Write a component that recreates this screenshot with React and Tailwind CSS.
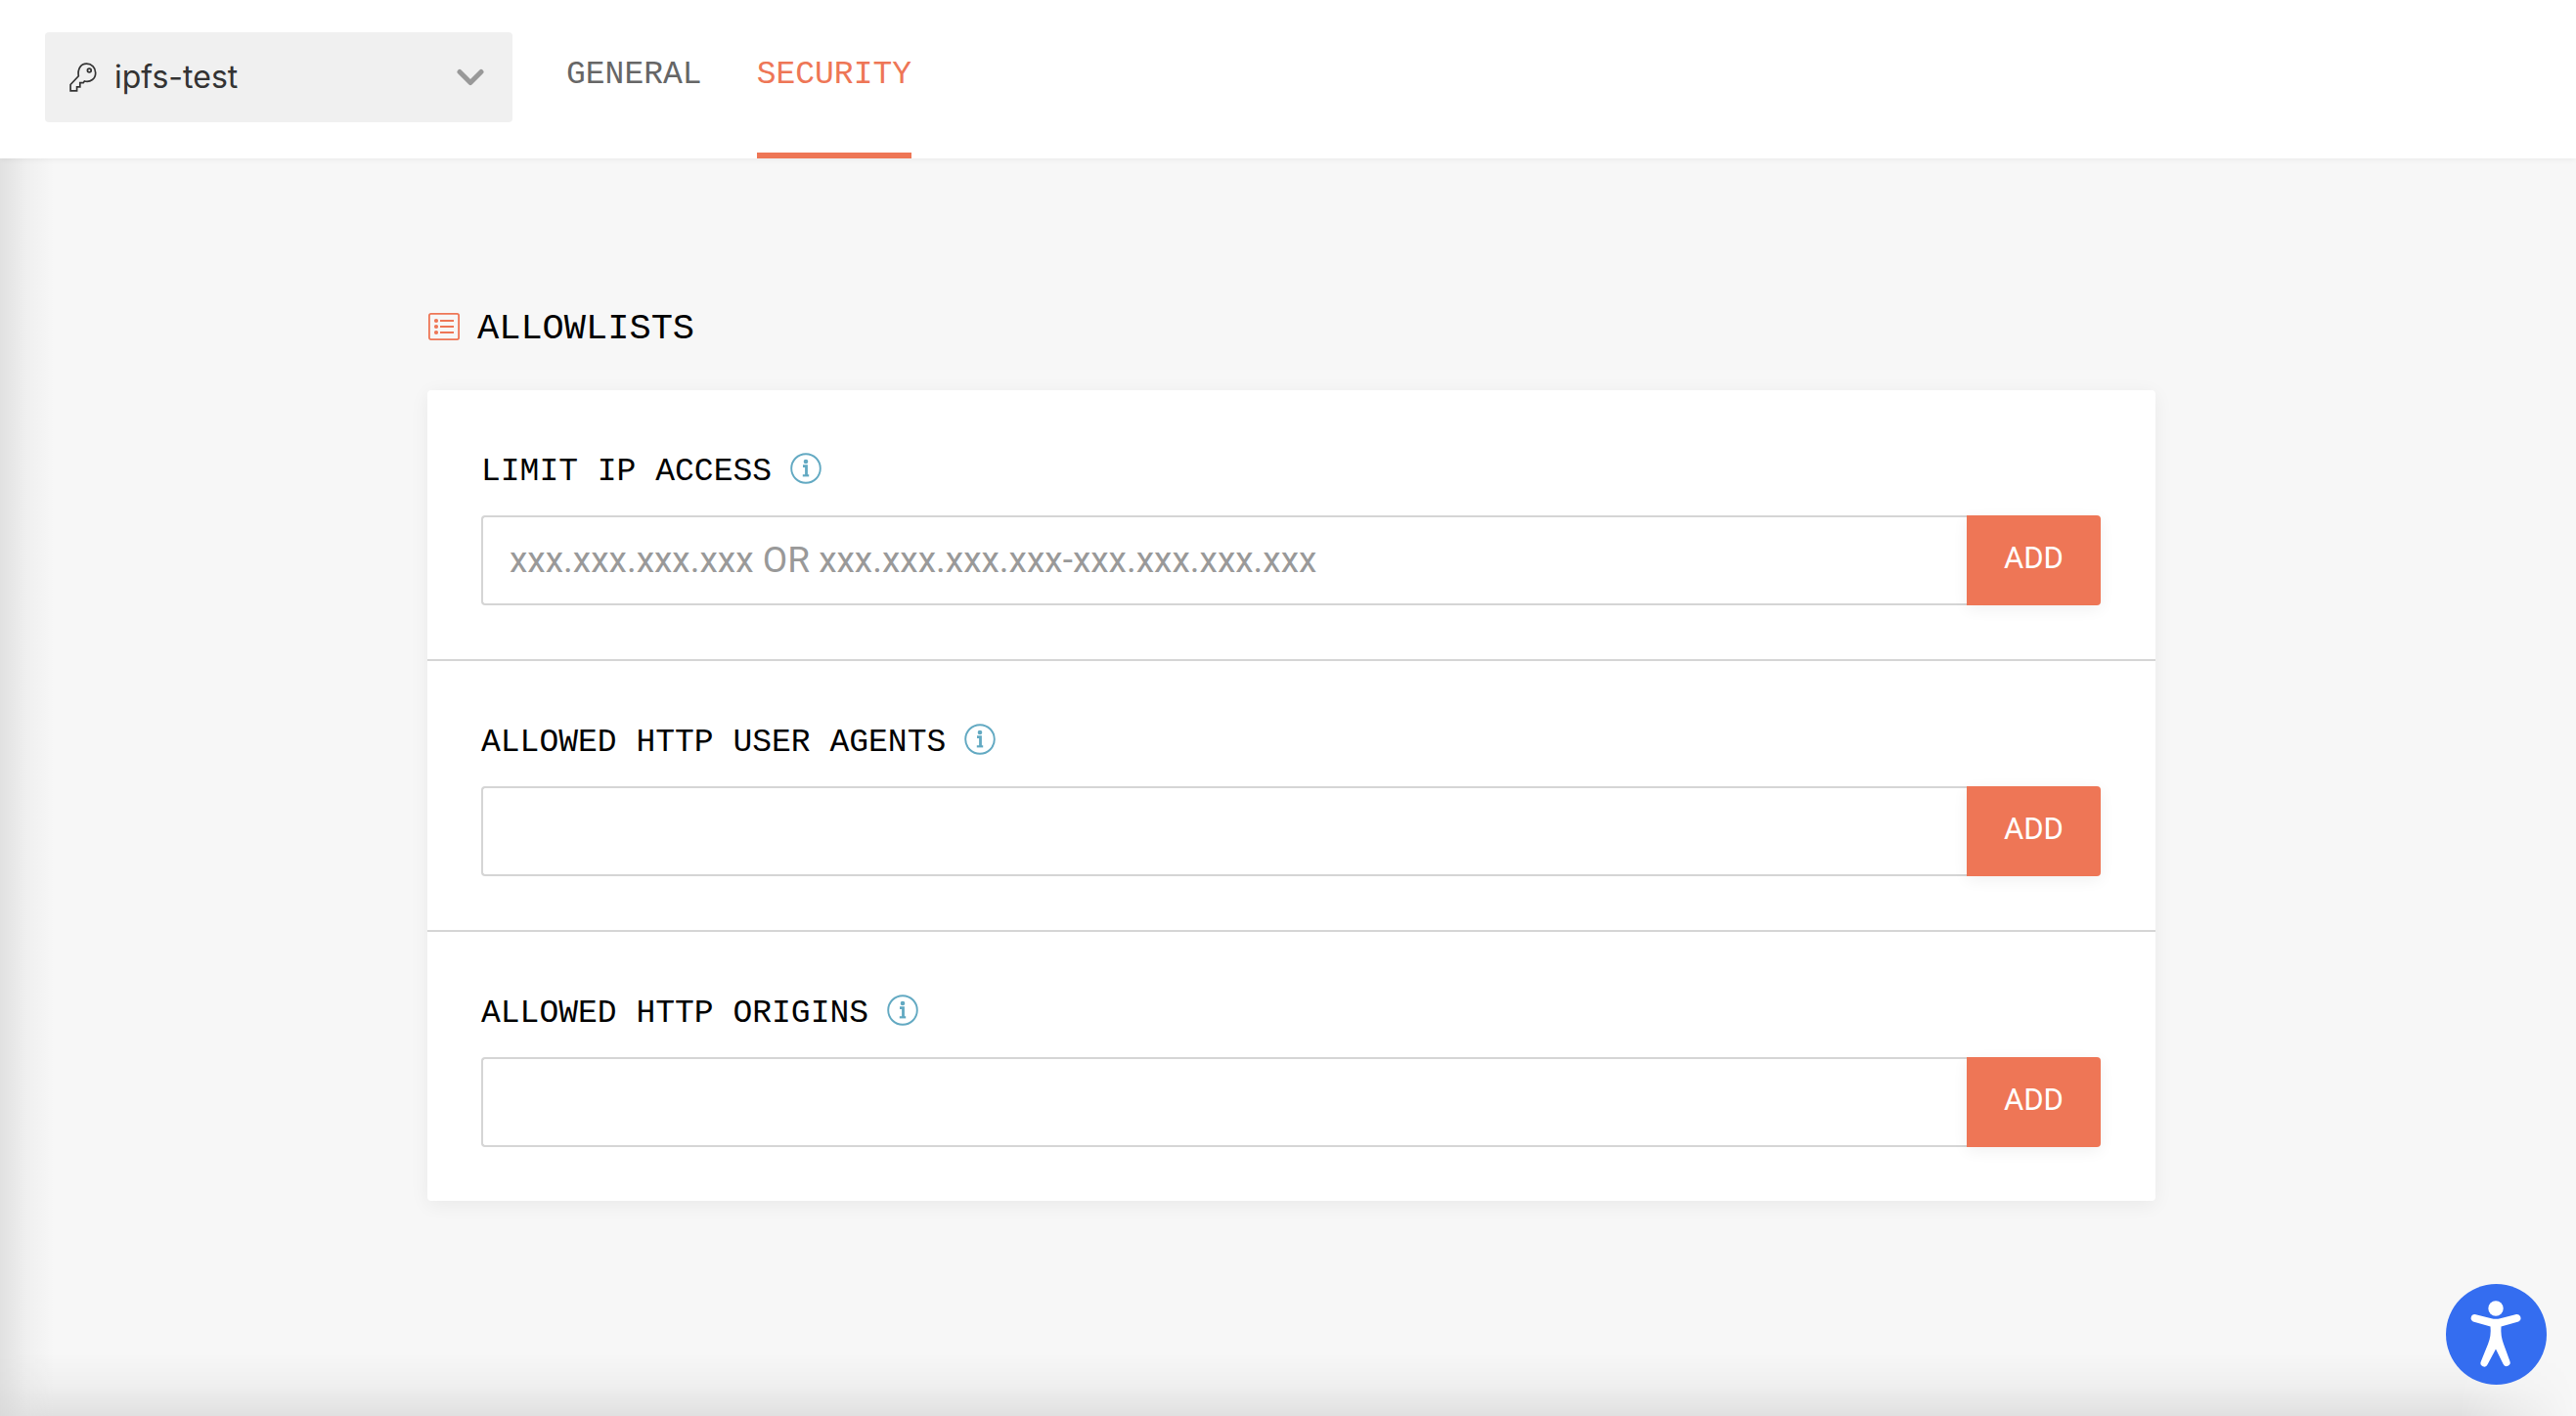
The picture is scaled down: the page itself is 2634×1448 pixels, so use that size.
import React from "react";

function KeyIcon() {
  return (
    <svg viewBox="0 0 28 30" className="h-[30px] w-7 shrink-0" fill="none" stroke="#333" strokeWidth="1.7" aria-hidden="true">
      <path d="M9.3 13.800C8.200 6.500 11.500 1.200 17.500 1.200c5.300 0 9.200 3.800 9.200 9.200 0 6.200-5 10-11.300 8.600l-1.200 1.700h-3.400v4.100H7.600v4.100H1.100v-6.400z" />
      <circle cx="20.300" cy="8" r="1.900" />
    </svg>
  );
}

function ListIcon() {
  return (
    <svg viewBox="0 0 32 28" className="mb-1.5 h-7 w-8 shrink-0" fill="none" stroke="#ee7656" aria-hidden="true">
      <rect x="0.900" y="0.900" width="30.200" height="26.200" rx="1.800" strokeWidth="1.800" />
      <path d="M12 8h14M12 14h14M12 20h14" strokeWidth="2.200" />
      <g fill="#ee7656" stroke="none">
        <circle cx="8" cy="8" r="2.100" />
        <circle cx="8" cy="14" r="2.100" />
        <circle cx="8" cy="20" r="2.100" />
      </g>
    </svg>
  );
}

function InfoIcon() {
  return (
    <svg viewBox="0 0 32 32" className="size-8" fill="none" stroke="#62a9c2" aria-hidden="true">
      <circle cx="16" cy="16" r="14.800" strokeWidth="1.900" />
      <circle cx="16" cy="9" r="2.300" fill="#62a9c2" stroke="none" />
      <path d="M13 13.700h3.500v9.500" strokeWidth="2.800" />
      <path d="M12.800 23.300h6.400" strokeWidth="2.200" />
    </svg>
  );
}

function Tab({ label, active }) {
  return (
    <a
      href="#"
      aria-current={active ? "page" : undefined}
      className={
        "flex h-full items-center border-b-[6px] pb-0.5 " +
        (active ? "border-[#ee7656] text-[#ee7656]" : "border-transparent text-[#666]")
      }
    >
      {label}
    </a>
  );
}

function Allowlist({ id, label, placeholder }) {
  return (
    <section className="pt-[62px] pr-14 pb-[55px] pl-[55px]">
      <div className="mb-[22px] flex h-11 items-center gap-[19px]">
        <label htmlFor={id} className="font-['Liberation_Mono',monospace] text-[33px] leading-[44px] text-black">
          {label}
        </label>
        <button type="button" aria-label={"About " + label} className="mb-2">
          <InfoIcon />
        </button>
      </div>
      <div className="flex h-[92px]">
        <input
          id={id}
          type="text"
          placeholder={placeholder}
          className="min-w-0 flex-1 rounded-l border-2 border-r-0 border-[#d5d5d5] bg-white px-[27px] font-[Roboto,sans-serif] text-[37px] text-[#333] outline-none placeholder:text-[#999]"
        />
        <button
          type="button"
          className="w-[137px] rounded-r bg-[#ee7656] pb-1 font-[Roboto,sans-serif] text-[31px] text-white shadow-[0_4px_16px_rgba(0,0,0,0.06)]"
        >
          ADD
        </button>
      </div>
    </section>
  );
}

export default function App() {
  return (
    <div className="flex min-h-screen flex-col bg-[#f7f7f7] font-[Inter,sans-serif]">
      <header className="z-10 flex h-[162px] bg-white pl-[46px] shadow-[0_1px_6px_rgba(0,0,0,0.06)]">
        <button
          type="button"
          aria-haspopup="listbox"
          className="mt-[33px] flex h-[92px] w-[478px] items-center rounded bg-[#f0f0f0] pr-[29px] pl-[25px] text-[#333]"
        >
          <KeyIcon />
          <span className="ml-[18px] flex-1 text-left text-[32px] leading-10">ipfs-test</span>
          <svg viewBox="0 0 28 18" className="h-[18px] w-7" fill="none" stroke="#999" strokeWidth="5" strokeLinecap="round" strokeLinejoin="round" aria-hidden="true">
            <path d="M3 3.500l11 11 11-11" />
          </svg>
        </button>
        <nav className="ml-[55px] flex gap-14 font-['Liberation_Mono',monospace] text-[33px]">
          <Tab label="GENERAL" />
          <Tab label="SECURITY" active />
        </nav>
      </header>

      <main className="relative flex-1 pt-[153px] pr-[430px] pl-[437px]">
        <h1 className="flex h-11 items-center gap-[18px] pl-px font-['Liberation_Mono',monospace] text-[37px] text-black">
          <ListIcon />
          ALLOWLISTS
        </h1>
        <div className="mt-10 divide-y-2 divide-[#d5d5d5] rounded bg-white shadow-[0_4px_20px_rgba(0,0,0,0.06)]">
          <Allowlist id="ip" label="LIMIT IP ACCESS" placeholder="xxx.xxx.xxx.xxx OR xxx.xxx.xxx.xxx-xxx.xxx.xxx.xxx" />
          <Allowlist id="agents" label="ALLOWED HTTP USER AGENTS" />
          <Allowlist id="origins" label="ALLOWED HTTP ORIGINS" />
        </div>
        <div className="pointer-events-none absolute inset-y-0 left-0 w-14 bg-linear-to-r from-black/9 via-black/3 to-transparent" />
        <div className="pointer-events-none absolute inset-x-0 bottom-0 h-16 bg-linear-to-t from-black/9 via-black/3 to-transparent [mask-image:linear-gradient(to_left,transparent,black_120px,black_calc(100%_-_56px),rgb(0_0_0/0.3))]" />
      </main>

      <button type="button" aria-label="Accessibility options" className="fixed right-[30px] bottom-8 z-20 size-[103px] rounded-full bg-[#346df0]">
        <svg viewBox="0 0 103 103" className="size-full" fill="#fff" aria-hidden="true">
          <circle cx="51" cy="25" r="7.700" />
          <path d="M29.500 31l17 4.200q4.500 1 9 0L72 31a3.900 3.900 0 0 1 2.200 7.400L56.500 43.500q-.8 9.500 2.500 18l6.300 17.300a3.700 3.700 0 0 1-6.800 3L51 66.500l-8.400 15.800a3.700 3.700 0 0 1-6.800-3L43 61.500q3.500-8.500 2.500-18L27.800 38.400A3.900 3.900 0 0 1 29.500 31z" />
        </svg>
      </button>
    </div>
  );
}
